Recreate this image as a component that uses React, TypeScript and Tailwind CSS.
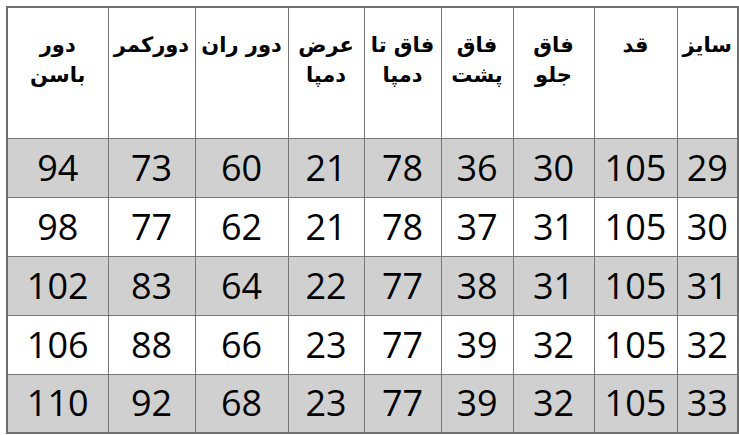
const headers: string[][] = [
  ["سایز"],
  ["قد"],
  ["فاق", "جلو"],
  ["فاق", "پشت"],
  ["فاق تا", "دمپا"],
  ["عرض", "دمپا"],
  ["دور ران"],
  ["دورکمر"],
  ["دور", "باسن"],
]

const widths = [61, 83, 81, 72, 77, 76, 93, 87, 101]

const rows: number[][] = [
  [29, 105, 30, 36, 78, 21, 60, 73, 94],
  [30, 105, 31, 37, 78, 21, 62, 77, 98],
  [31, 105, 31, 38, 77, 22, 64, 83, 102],
  [32, 105, 32, 39, 77, 23, 66, 88, 106],
  [33, 105, 32, 39, 77, 23, 68, 92, 110],
]

export default function App() {
  return (
    <div className="w-[739px] h-[435px] bg-white pt-[6px] pl-[6px] overflow-hidden">
      <table dir="rtl" className="w-[731px] table-fixed border-collapse border-2 border-[#6f6f6f]">
        <colgroup>
          {widths.map((w, i) => (
            <col key={i} style={{ width: w }} />
          ))}
        </colgroup>
        <thead>
          <tr className="h-[131px]">
            {headers.map((lines, i) => (
              <th
                key={i}
                className="border border-[#777777] align-top pt-[22px] px-0 text-center font-bold text-[21px] leading-[30px] text-black whitespace-nowrap"
                style={{ fontFamily: '"DejaVu Sans", sans-serif' }}
              >
                {lines.map((l, j) => (
                  <div key={j}>{l}</div>
                ))}
              </th>
            ))}
          </tr>
        </thead>
        <tbody>
          {rows.map((r, ri) => (
            <tr key={ri} className={`h-[59px] ${ri % 2 === 0 ? "bg-[#d0d0d0]" : "bg-white"}`}>
              {r.map((v, ci) => (
                <td
                  key={ci}
                  className="border border-[#777777] text-center align-middle text-[36px] leading-none text-black font-['Open_Sans',sans-serif]"
                >
                  {v}
                </td>
              ))}
            </tr>
          ))}
        </tbody>
      </table>
    </div>
  )
}
